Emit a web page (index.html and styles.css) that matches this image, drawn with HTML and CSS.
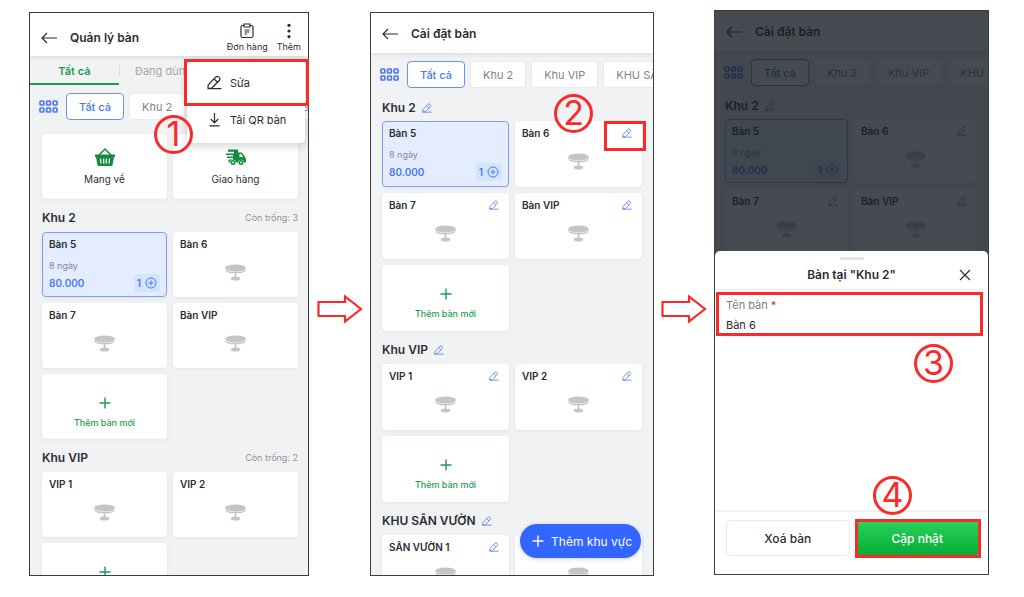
FILE: index.html
```
<!DOCTYPE html>
<html lang="vi">
<head>
<meta charset="UTF-8">
<meta name="viewport" content="width=device-width, initial-scale=1.0">
<title>Quản lý bàn</title>
<link rel="stylesheet" href="styles.css">
</head>
<body>
    <svg class="sprite" aria-hidden="true">
        <symbol id="back" viewBox="0 0 16 12"><path d="M6 1L1 6l5 5M1 6h15" fill="none" stroke="currentColor" stroke-width="1.200"/></symbol>
        <symbol id="clipboard" viewBox="0 0 14 16"><path d="M4 2.500H2.500Q1 2.500 1 4v9q0 1.500 1.500 1.500h9Q13 14.500 13 13V4q0-1.500-1.500-1.500H10M4 1h6v3H4zM4.500 7h5M4.500 9h5M4.500 11h2.500" fill="none" stroke="currentColor" stroke-width="1.200"/></symbol>
        <symbol id="dots" viewBox="0 0 4 14"><circle cx="2" cy="2" r="1.400"/><circle cx="2" cy="7" r="1.400"/><circle cx="2" cy="12" r="1.400"/></symbol>
        <symbol id="pencil" viewBox="0 0 14 14"><path d="M1 12.800V9.500L8 2q1.500-1.500 3.200 0t.2 3.200L4.500 12.200 1 12.800h12.500M6.600 3.600l3.200 3.200" fill="none" stroke="currentColor" stroke-width="1.200" stroke-linejoin="round"/></symbol>
        <symbol id="download" viewBox="0 0 12 16"><path d="M6 1v10M2 7.500l4 4 4-4M.5 14.800h11" fill="none" stroke="currentColor" stroke-width="1.300"/></symbol>
        <symbol id="zones" viewBox="0 0 19 13"><g fill="none" stroke="currentColor" stroke-width="1.700"><rect x="1" y="1" width="3.800" height="4" rx=".8"/><rect x="7.600" y="1" width="3.800" height="4" rx=".8"/><rect x="14.200" y="1" width="3.800" height="4" rx=".8"/><rect x="1" y="8" width="3.800" height="4" rx=".8"/><rect x="7.600" y="8" width="3.800" height="4" rx=".8"/><rect x="14.200" y="8" width="3.800" height="4" rx=".8"/></g></symbol>
        <symbol id="table" viewBox="0 0 20 16"><path d="M0 4.800C.2 7.800 5 8.800 10 8.800s9.800-1 10-4C18 6.800 14 7.400 10 7.400S2 6.800 0 4.800z"/><ellipse cx="10" cy="3.700" rx="9.900" ry="3.300"/><path d="M9.200 8.500h1.600v4H9.200z"/><ellipse cx="10" cy="13.700" rx="4.500" ry="2"/></symbol>
        <symbol id="basket" viewBox="0 0 20 20"><path d="M4 8l6-6 6 6" fill="none" stroke="currentColor" stroke-width="1.500" stroke-linejoin="round"/><path d="M0 7.500h20v2.500h-1l-1.300 7.500Q17.300 19 16 19H4q-1.300 0-1.700-1.500L1 10H0z"/><path d="M5.500 11.500l.5 5M8.600 11.500l.2 5M11.400 11.500l-.2 5M14.500 11.500l-.5 5" stroke="#fff" stroke-width="1.200"/></symbol>
        <symbol id="truck" viewBox="0 0 20 17"><path d="M2 1h10v3h3.500L19 8v1l1 1v4h-2.200a2.800 2.800 0 0 0-5.600 0H9.800a2.800 2.800 0 0 0-5.600 0H2.500v-3H7V9.500H1V8h6V6.500H0V5h8V3.300H2zM13.500 5.500V8.500h3.800l-2.500-3z"/><circle cx="7" cy="14" r="1.700" fill="none" stroke="currentColor" stroke-width="1.600"/><circle cx="15" cy="14" r="1.700" fill="none" stroke="currentColor" stroke-width="1.600"/></symbol>
        <symbol id="plus" viewBox="0 0 12 12"><path d="M6 .5v11M.5 6h11" stroke="currentColor" stroke-width="1.400"/></symbol>
        <symbol id="add" viewBox="0 0 12 12"><circle cx="6" cy="6" r="5" fill="none" stroke="currentColor"/><path d="M6 3.500v5M3.500 6h5" stroke="currentColor"/></symbol>
        <symbol id="close" viewBox="0 0 12 12"><path d="M1 1l10 10M11 1L1 11" stroke="currentColor" stroke-width="1.200"/></symbol>
        <symbol id="arrow" viewBox="0 0 46 30"><path d="M1.500 8H28V2.500L44 15 28 27.500V22H1.500z" fill="none" stroke="currentColor" stroke-width="2.200"/></symbol>
    </svg>

    <main class="guide">
        <!-- Step 1: table list -->
        <section class="step step-list">
            <div class="phone">
                <header class="bar bar-tall">
                    <button class="icon-btn" aria-label="Quay lại"><svg class="i-back"><use href="#back"/></svg></button>
                    <h1>Quản lý bàn</h1>
                    <div class="actions">
                        <button class="action"><svg class="i-action"><use href="#clipboard"/></svg>Đơn hàng</button>
                        <button class="action"><svg class="i-action"><use href="#dots"/></svg>Thêm</button>
                    </div>
                </header>
                <nav class="tabs">
                    <button class="tab active">Tất cả</button>
                    <button class="tab">Đang dùng</button>
                </nav>
                <nav class="filters">
                    <svg class="i-zones"><use href="#zones"/></svg>
                    <button class="chip active">Tất cả</button>
                    <button class="chip">Khu 2</button>
                    <button class="chip">Khu VIP</button>
                    <button class="chip">KHU SÂN VƯỜN</button>
                </nav>
                <div class="content first">
                    <div class="cards">
                        <button class="card service"><svg class="i-service"><use href="#basket"/></svg>Mang về</button>
                        <button class="card service"><svg class="i-service"><use href="#truck"/></svg>Giao hàng</button>
                    </div>
                    <div class="zone"><h2>Khu 2</h2><span class="free">Còn trống: 3</span></div>
                    <div class="cards">
                        <article class="card busy">
                            <h3>Bàn 5</h3>
                            <p class="days">8 ngày</p>
                            <p class="price">80.000 <span class="count">1 <svg class="i-add"><use href="#add"/></svg></span></p>
                        </article>
                        <article class="card"><h3>Bàn 6</h3><svg class="i-table"><use href="#table"/></svg></article>
                        <article class="card"><h3>Bàn 7</h3><svg class="i-table"><use href="#table"/></svg></article>
                        <article class="card"><h3>Bàn VIP</h3><svg class="i-table"><use href="#table"/></svg></article>
                        <button class="card new"><svg class="i-plus"><use href="#plus"/></svg>Thêm bàn mới</button>
                    </div>
                    <div class="zone"><h2>Khu VIP</h2><span class="free">Còn trống: 2</span></div>
                    <div class="cards">
                        <article class="card"><h3>VIP 1</h3><svg class="i-table"><use href="#table"/></svg></article>
                        <article class="card"><h3>VIP 2</h3><svg class="i-table"><use href="#table"/></svg></article>
                        <button class="card new" aria-label="Thêm bàn mới"><svg class="i-plus"><use href="#plus"/></svg></button>
                    </div>
                </div>
                <div class="menu">
                    <button class="menu-item"><svg class="i-menu"><use href="#pencil"/></svg>Sửa</button>
                    <button class="menu-item"><svg class="i-menu"><use href="#download"/></svg>Tải QR bàn</button>
                </div>
            </div>
            <div class="mark mark-menu"></div>
            <div class="num num-1">1</div>
        </section>

        <svg class="arrow"><use href="#arrow"/></svg>

        <!-- Step 2: table settings -->
        <section class="step">
            <div class="phone">
                <header class="bar">
                    <button class="icon-btn" aria-label="Quay lại"><svg class="i-back"><use href="#back"/></svg></button>
                    <h1>Cài đặt bàn</h1>
                </header>
                <nav class="filters">
                    <svg class="i-zones"><use href="#zones"/></svg>
                    <button class="chip active">Tất cả</button>
                    <button class="chip">Khu 2</button>
                    <button class="chip">Khu VIP</button>
                    <button class="chip">KHU SÂN VƯỜN</button>
                </nav>
                <div class="content">
                    <div class="zone"><h2>Khu 2</h2><button class="edit" aria-label="Sửa Khu 2"><svg><use href="#pencil"/></svg></button></div>
                    <div class="cards">
                        <article class="card busy">
                            <h3>Bàn 5</h3>
                            <p class="days">8 ngày</p>
                            <p class="price">80.000 <span class="count">1 <svg class="i-add"><use href="#add"/></svg></span></p>
                        </article>
                        <article class="card">
                            <div class="card-top"><h3>Bàn 6</h3><button class="edit" aria-label="Sửa Bàn 6"><svg><use href="#pencil"/></svg></button></div>
                            <svg class="i-table"><use href="#table"/></svg>
                        </article>
                        <article class="card">
                            <div class="card-top"><h3>Bàn 7</h3><button class="edit" aria-label="Sửa Bàn 7"><svg><use href="#pencil"/></svg></button></div>
                            <svg class="i-table"><use href="#table"/></svg>
                        </article>
                        <article class="card">
                            <div class="card-top"><h3>Bàn VIP</h3><button class="edit" aria-label="Sửa Bàn VIP"><svg><use href="#pencil"/></svg></button></div>
                            <svg class="i-table"><use href="#table"/></svg>
                        </article>
                        <button class="card new"><svg class="i-plus"><use href="#plus"/></svg>Thêm bàn mới</button>
                    </div>
                    <div class="zone"><h2>Khu VIP</h2><button class="edit" aria-label="Sửa Khu VIP"><svg><use href="#pencil"/></svg></button></div>
                    <div class="cards">
                        <article class="card">
                            <div class="card-top"><h3>VIP 1</h3><button class="edit" aria-label="Sửa VIP 1"><svg><use href="#pencil"/></svg></button></div>
                            <svg class="i-table"><use href="#table"/></svg>
                        </article>
                        <article class="card">
                            <div class="card-top"><h3>VIP 2</h3><button class="edit" aria-label="Sửa VIP 2"><svg><use href="#pencil"/></svg></button></div>
                            <svg class="i-table"><use href="#table"/></svg>
                        </article>
                        <button class="card new"><svg class="i-plus"><use href="#plus"/></svg>Thêm bàn mới</button>
                    </div>
                    <div class="zone"><h2>KHU SÂN VƯỜN</h2><button class="edit" aria-label="Sửa KHU SÂN VƯỜN"><svg><use href="#pencil"/></svg></button></div>
                    <div class="cards">
                        <article class="card">
                            <div class="card-top"><h3>SÂN VƯỜN 1</h3><button class="edit" aria-label="Sửa SÂN VƯỜN 1"><svg><use href="#pencil"/></svg></button></div>
                            <svg class="i-table"><use href="#table"/></svg>
                        </article>
                        <article class="card"><h3></h3><svg class="i-table"><use href="#table"/></svg></article>
                    </div>
                </div>
                <button class="fab"><svg class="i-plus"><use href="#plus"/></svg>Thêm khu vực</button>
            </div>
            <div class="mark mark-edit"></div>
            <div class="num num-2">2</div>
        </section>

        <svg class="arrow"><use href="#arrow"/></svg>

        <!-- Step 3: edit sheet over the settings screen -->
        <section class="step step-sheet">
            <div class="phone">
                <header class="bar">
                    <button class="icon-btn" aria-label="Quay lại"><svg class="i-back"><use href="#back"/></svg></button>
                    <h1>Cài đặt bàn</h1>
                </header>
                <nav class="filters">
                    <svg class="i-zones"><use href="#zones"/></svg>
                    <button class="chip active">Tất cả</button>
                    <button class="chip">Khu 2</button>
                    <button class="chip">Khu VIP</button>
                    <button class="chip">KHU SÂN VƯỜN</button>
                </nav>
                <div class="content">
                    <div class="zone"><h2>Khu 2</h2><button class="edit" aria-label="Sửa Khu 2"><svg><use href="#pencil"/></svg></button></div>
                    <div class="cards">
                        <article class="card busy">
                            <h3>Bàn 5</h3>
                            <p class="days">8 ngày</p>
                            <p class="price">80.000 <span class="count">1 <svg class="i-add"><use href="#add"/></svg></span></p>
                        </article>
                        <article class="card">
                            <div class="card-top"><h3>Bàn 6</h3><button class="edit" aria-label="Sửa Bàn 6"><svg><use href="#pencil"/></svg></button></div>
                            <svg class="i-table"><use href="#table"/></svg>
                        </article>
                        <article class="card">
                            <div class="card-top"><h3>Bàn 7</h3><button class="edit" aria-label="Sửa Bàn 7"><svg><use href="#pencil"/></svg></button></div>
                            <svg class="i-table"><use href="#table"/></svg>
                        </article>
                        <article class="card">
                            <div class="card-top"><h3>Bàn VIP</h3><button class="edit" aria-label="Sửa Bàn VIP"><svg><use href="#pencil"/></svg></button></div>
                            <svg class="i-table"><use href="#table"/></svg>
                        </article>
                    </div>
                </div>
                <div class="overlay">
                    <form class="sheet">
                        <div class="handle"></div>
                        <div class="sheet-head">
                            <h2>Bàn tại "Khu 2"</h2>
                            <button type="button" class="icon-btn" aria-label="Đóng"><svg class="i-close"><use href="#close"/></svg></button>
                        </div>
                        <div class="field">
                            <label for="tableName">Tên bàn <span class="required">*</span></label>
                            <input type="text" id="tableName" name="tableName" value="Bàn 6">
                        </div>
                        <div class="sheet-foot">
                            <button type="button" class="btn">Xoá bàn</button>
                            <button type="submit" class="btn btn-primary">Cập nhật</button>
                        </div>
                    </form>
                </div>
            </div>
            <div class="mark mark-field"></div>
            <div class="mark mark-submit"></div>
            <div class="num num-3">3</div>
            <div class="num num-4">4</div>
        </section>
    </main>
</body>
</html>
```
FILE: styles.css
```
* {
    box-sizing: border-box;
}
body {
    margin: 0;
    font-family: Inter, sans-serif;
    font-size: 10px;
    color: #2b2d33;
    background-color: #ffffff;
}
h1, h2, h3, p {
    margin: 0;
}
h1, h2 {
    font-size: 12px;
    font-weight: 600;
    line-height: 16px;
}
h3 {
    min-height: 12px;
    font-size: 10px;
    font-weight: 600;
    line-height: 12px;
}
button {
    margin: 0;
    padding: 0;
    border: none;
    background: none;
    color: inherit;
    font: inherit;
    cursor: pointer;
}
svg {
    display: block;
    flex: none;
    fill: currentColor;
}
.sprite {
    position: absolute;
    width: 0;
    height: 0;
}
.guide {
    display: grid;
    grid-template-columns: 280fr 61px 284fr 60px 275fr;
    grid-template-rows: minmax(0, 1fr);
    height: 100vh;
    padding: 12px 35px 21px 29px;
}
.step {
    position: relative;
    min-width: 0;
}
.step-sheet {
    margin: -2px 0 1px;
}
.phone {
    position: relative;
    height: 100%;
    overflow: hidden;
    border: 1px solid #3c3c3e;
    background-color: #f1f2f4;
}
.arrow {
    width: 46px;
    height: 30px;
    margin-top: 30px;
    align-self: center;
    justify-self: center;
    color: #fb2a2a;
}

/* header */
.bar {
    position: relative;
    display: flex;
    align-items: center;
    gap: 13px;
    height: 40px;
    padding: 2px 7px 0 11px;
    background-color: #ffffff;
    box-shadow: 0 1px 5px rgba(0, 0, 0, 0.12);
}
.bar-tall {
    height: 43px;
    padding-top: 6px;
}
.i-back {
    width: 16px;
    height: 12px;
}
.actions {
    display: flex;
    gap: 9px;
    margin-left: auto;
}
.action {
    font-size: 9px;
    line-height: 12px;
}
.i-action {
    width: 14px;
    height: 16px;
    margin: 0 auto 2px;
}

/* tabs and filters */
.tabs {
    display: flex;
    height: 29px;
}
.tab {
    position: relative;
    flex: 0 0 32%;
    padding-top: 2px;
    border-bottom: 2px solid transparent;
    color: #a5a7ab;
    font-size: 11px;
}
.tab + .tab {
    background: linear-gradient(#dddfe2, #dddfe2) left center / 1px 13px no-repeat;
}
.tab.active {
    border-color: #1e9c4c;
    color: #1e9c4c;
    font-weight: 600;
}
.filters {
    display: flex;
    align-items: center;
    gap: 5px;
    padding: 8px 0 0 9px;
}
.i-zones {
    width: 19px;
    height: 13px;
    margin-right: 3px;
    color: #4a78f5;
}
.chip {
    flex: none;
    height: 27px;
    padding: 0 12px;
    border: 1px solid #e9eaed;
    border-radius: 4px;
    background-color: #ffffff;
    color: #808389;
    font-size: 11px;
}
.chip.active {
    border-color: #6a90f6;
    color: #4a78f5;
    font-weight: 500;
}

/* cards */
.content {
    padding: 4px 11px 0;
}
.content.first {
    padding: 14px 10px 0 12px;
}
.zone {
    display: flex;
    align-items: center;
    gap: 6px;
    height: 33px;
    padding-top: 4px;
}
.content:not(.first) .zone:first-child {
    height: 29px;
    padding-top: 3px;
}
.free {
    margin-left: auto;
    color: #919499;
    font-size: 9px;
}
.cards {
    display: grid;
    grid-template-columns: 1fr 1fr;
    grid-auto-rows: 66px;
    gap: 6px;
}
.first .cards {
    grid-auto-rows: 65px;
}
.card {
    display: flex;
    flex-direction: column;
    padding: 6px 7px;
    border-radius: 4px;
    background-color: #ffffff;
    box-shadow: 0 1px 4px rgba(0, 0, 0, 0.06);
}
.card.service, .card.new {
    align-items: center;
}
.card.service {
    padding-top: 13px;
    gap: 6px;
}
.i-service {
    width: 20px;
    height: 20px;
    color: #148c3e;
}
.card.new {
    gap: 8px;
    padding-top: 23px;
    color: #1e9c4c;
    font-size: 9px;
    font-weight: 500;
}
.i-plus {
    width: 12px;
    height: 12px;
}
.card-top {
    display: flex;
    justify-content: space-between;
    padding-right: 3px;
}
.i-table {
    width: 21px;
    height: 17px;
    margin: 14px auto 0;
    color: #c3c6c9;
}
.card.busy {
    padding: 5px 6px;
    border: 1px solid #7f9ff6;
    background-color: #e4edff;
}
.days {
    margin-top: 10px;
    color: #85888e;
    font-size: 9px;
    line-height: 12px;
}
.price {
    display: flex;
    align-items: center;
    justify-content: space-between;
    height: 18px;
    margin-top: 2px;
    color: #4a78f5;
    font-weight: 600;
}
.count {
    display: flex;
    align-items: center;
    gap: 4px;
    height: 18px;
    padding: 0 3px;
    border-radius: 3px;
    background-color: #d3e4ff;
}
.i-add {
    width: 12px;
    height: 12px;
}
.edit {
    color: #5a82f5;
}
.edit svg {
    width: 10px;
    height: 10px;
}

/* menu and floating button */
.menu {
    position: absolute;
    top: 46px;
    right: 3px;
    display: grid;
    grid-auto-rows: 37px;
    width: 118px;
    padding: 5px 0;
    border-radius: 5px;
    background-color: #ffffff;
    box-shadow: 0 3px 10px rgba(0, 0, 0, 0.18);
}
.menu-item {
    display: flex;
    align-items: center;
    gap: 8px;
    padding-left: 20px;
    font-size: 11px;
}
.i-menu {
    width: 15px;
    height: 15px;
}
.fab {
    position: absolute;
    right: 12px;
    bottom: 17px;
    display: flex;
    align-items: center;
    gap: 7px;
    height: 34px;
    padding: 0 9px 0 12px;
    border-radius: 17px;
    background-color: #3366ff;
    box-shadow: 0 1px 4px rgba(0, 0, 0, 0.2);
    color: #ffffff;
    font-size: 12px;
}

/* bottom sheet */
.step-sheet .content {
    padding-left: 10px;
}
.step-sheet .cards {
    grid-auto-rows: 64px;
}
.overlay {
    position: absolute;
    inset: 0;
    padding-top: 240px;
    background-color: rgba(24, 29, 38, 0.8);
}
.sheet {
    display: flex;
    flex-direction: column;
    height: 100%;
    padding-top: 6px;
    border-radius: 5px 5px 0 0;
    background-color: #ffffff;
}
.handle {
    width: 24px;
    height: 3px;
    margin: 0 auto;
    border-radius: 2px;
    background-color: #e3e4e6;
}
.sheet-head {
    display: grid;
    grid-template-columns: 12px 1fr 12px;
    align-items: center;
    height: 30px;
    padding: 0 17px;
    border-bottom: 1px solid #eeeff1;
    text-align: center;
}
.sheet-head h2 {
    grid-column: 2;
}
.i-close {
    width: 12px;
    height: 12px;
}
.field {
    display: grid;
    margin: 7px 11px 0;
    border-bottom: 1px solid #eeeff1;
    font-size: 11px;
}
.field label {
    color: #7a7d83;
    line-height: 16px;
}
.required {
    color: #e5333a;
}
.field input {
    width: 100%;
    height: 24px;
    padding: 0;
    border: none;
    outline: none;
    background: none;
    color: inherit;
    font: inherit;
}
.sheet-foot {
    display: grid;
    grid-template-columns: 1fr 1fr;
    gap: 6px;
    margin-top: auto;
    padding: 8px 9px 18px 11px;
    box-shadow: 0 -1px 3px rgba(0, 0, 0, 0.1);
}
.btn {
    height: 36px;
    border: 1px solid #e9eaec;
    border-radius: 5px;
    font-size: 12px;
    font-weight: 500;
}
.btn-primary {
    border: none;
    background: linear-gradient(#2bd35c, #04ab35);
    color: #ffffff;
}

/* red marks drawn over the screens */
.mark {
    position: absolute;
    border: 3px solid #fb2a2a;
    pointer-events: none;
}
.mark-menu {
    top: 47px;
    right: 0;
    width: 125px;
    height: 47px;
}
.mark-edit {
    top: 109px;
    right: 8px;
    width: 42px;
    height: 30px;
}
.mark-field {
    top: 282px;
    left: 2px;
    right: 6px;
    height: 44px;
}
.mark-submit {
    right: 8px;
    bottom: 17px;
    width: 126px;
    height: 39px;
}
.num {
    position: absolute;
    width: 39px;
    height: 39px;
    border: 3px solid #fb2a2a;
    border-radius: 50%;
    color: #fb2a2a;
    font-size: 34px;
    line-height: 32px;
    text-align: center;
}
.num-1 {
    top: 103px;
    right: 116px;
}
.num-2 {
    top: 82px;
    right: 61px;
}
.num-3 {
    top: 334px;
    right: 36px;
}
.num-4 {
    right: 77px;
    bottom: 60px;
}
```
